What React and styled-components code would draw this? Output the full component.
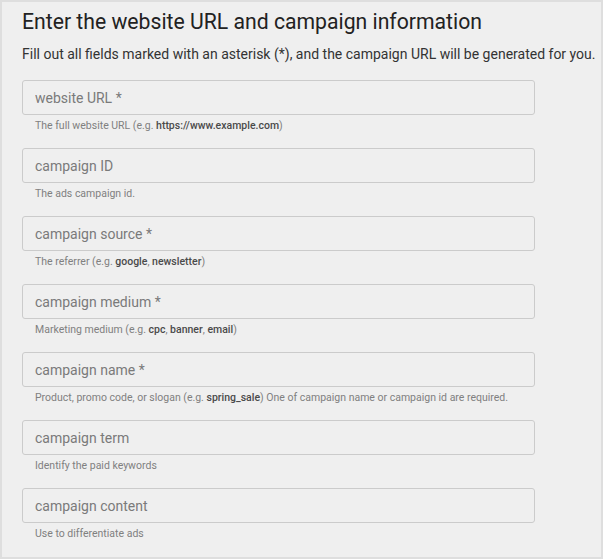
import React from 'react';
import styled, { createGlobalStyle } from 'styled-components';

const GlobalStyle = createGlobalStyle`
  body {
    margin: 0;
    background: #ffffff;
    font-family: Roboto, "Liberation Sans", sans-serif;
  }
`;

const StyledPanel = styled.section`
  box-sizing: border-box;
  width: 603px;
  height: 559px;
  border: 2px solid #dedede;
  background: #efefef;
  padding: 7px 20px 0;
  overflow: hidden;

  .title {
    margin: 0;
    font-size: 21.2px;
    font-weight: 400;
    line-height: 25px;
    color: #222;
  }

  .intro {
    margin: 10px 0 16px;
    font-size: 14px;
    line-height: 20px;
    color: #333;
    white-space: nowrap;
  }
`;

const Field = styled.div`
  display: flex;
  flex-direction: column;
  width: 513px;
  margin-bottom: 15px;
`;

const Input = styled.input`
  box-sizing: border-box;
  width: 100%;
  height: 35px;
  padding: 0 12px;
  border: 1px solid #cbcbcb;
  border-radius: 3px;
  background: #efefef;
  font-family: Roboto, "Liberation Sans", sans-serif;
  font-size: 14px;
  color: #333;
  outline: none;

  &::placeholder {
    color: #7a7a7a;
  }
`;

const Hint = styled.div`
  margin-top: 4px;
  padding-left: 13px;
  font-size: 10.5px;
  line-height: 14px;
  color: #808080;

  b {
    font-weight: 500;
    color: #4a4a4a;
  }
`;

const fields = [
  {
    placeholder: 'website URL *',
    hint: <>The full website URL (e.g. <b>https://www.example.com</b>)</>,
  },
  { placeholder: 'campaign ID', hint: <>The ads campaign id.</> },
  {
    placeholder: 'campaign source *',
    hint: <>The referrer (e.g. <b>google</b>, <b>newsletter</b>)</>,
  },
  {
    placeholder: 'campaign medium *',
    hint: <>Marketing medium (e.g. <b>cpc</b>, <b>banner</b>, <b>email</b>)</>,
  },
  {
    placeholder: 'campaign name *',
    hint: (
      <>
        Product, promo code, or slogan (e.g. <b>spring_sale</b>) One of campaign name or
        campaign id are required.
      </>
    ),
  },
  { placeholder: 'campaign term', hint: <>Identify the paid keywords</> },
  { placeholder: 'campaign content', hint: <>Use to differentiate ads</> },
];

const App = () => (
  <>
    <GlobalStyle />
    <StyledPanel>
      <h2 className="title">Enter the website URL and campaign information</h2>
      <p className="intro">
        Fill out all fields marked with an asterisk (*), and the campaign URL will be generated for you.
      </p>
      {fields.map(f => (
        <Field key={f.placeholder}>
          <Input type="text" placeholder={f.placeholder} />
          <Hint>{f.hint}</Hint>
        </Field>
      ))}
    </StyledPanel>
  </>
);

export default App;
